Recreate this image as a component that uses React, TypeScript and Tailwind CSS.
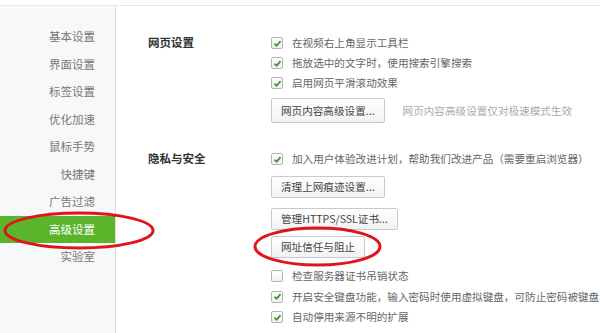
const menu = ['基本设置', '界面设置', '标签设置', '优化加速', '鼠标手势', '快捷键', '广告过滤', '高级设置', '实验室']

function Check({ checked = true }: { checked?: boolean }) {
  return (
    <span className="flex h-[12px] w-[12px] shrink-0 items-center justify-center rounded-[2px] border border-[#b4b4b4] bg-gradient-to-b from-white to-[#f1f1f1]">
      {checked && (
        <svg viewBox="0 0 10 10" className="h-[9px] w-[9px]">
          <path d="M1.6 5.2 L4 7.4 L8.4 2.4" fill="none" stroke="#3c9a2a" strokeWidth="1.9" />
        </svg>
      )}
    </span>
  )
}

function Row({ text, checked = true, h = 'h-5' }: { text: string; checked?: boolean; h?: string }) {
  return (
    <div className={`flex items-center gap-[9px] ${h}`}>
      <Check checked={checked} />
      <span className="whitespace-nowrap">{text}</span>
    </div>
  )
}

function Btn({ children, className = '' }: { children: React.ReactNode; className?: string }) {
  return (
    <div
      className={`flex h-[22px] w-fit items-center whitespace-nowrap rounded-[2px] border border-[#c9c9c9] bg-gradient-to-b from-white to-[#f2f2f2] px-[9px] text-[#444] ${className}`}
    >
      {children}
    </div>
  )
}

export default function App() {
  return (
    <div className="relative h-[333px] w-[600px] overflow-hidden bg-white font-['Noto_Sans_CJK_SC',sans-serif]">
      <div className="h-[6px] border-b border-[#e6e8eb]" />
      <div className="flex h-[327px]">
        <aside className="w-[116px] shrink-0 border-r border-[#dadde2] bg-[#f7f8fa] pt-[17px] text-[11.5px] text-[#777]">
          {menu.map((m) => (
            <div
              key={m}
              className={`flex h-[27.5px] items-center justify-end pr-[20px] ${
                m === '高级设置' ? 'bg-[#5ab52b] text-white' : ''
              }`}
            >
              {m}
            </div>
          ))}
        </aside>

        <main className="flex-1 pl-[32px] pt-[27px] text-[10.6px] text-[#666]">
          <section className="flex">
            <h2 className="flex h-5 w-[123px] shrink-0 items-center text-[11.5px] font-bold text-[#333]">网页设置</h2>
            <div>
              <Row text="在视频右上角显示工具栏" />
              <Row text="拖放选中的文字时，使用搜索引擎搜索" />
              <Row text="启用网页平滑滚动效果" />
              <div className="mt-[5px] flex items-center">
                <Btn className="h-[25px]">网页内容高级设置...</Btn>
                <span className="ml-[18px] text-[#aaa]">网页内容高级设置仅对极速模式生效</span>
              </div>
            </div>
          </section>

          <section className="mt-[26px] flex">
            <h2 className="flex h-5 w-[123px] shrink-0 items-center text-[11.5px] font-bold text-[#333]">隐私与安全</h2>
            <div>
              <Row text="加入用户体验改进计划，帮助我们改进产品（需要重启浏览器）" />
              <Btn className="mt-[7px]">清理上网痕迹设置...</Btn>
              <Btn className="mt-[10px]">管理HTTPS/SSL证书...</Btn>
              <Btn className="mt-[6px]">网址信任与阻止</Btn>
              <div className="mt-[8px]">
                <Row text="检查服务器证书吊销状态" checked={false} h="h-[20.5px]" />
                <Row text="开启安全键盘功能，输入密码时使用虚拟键盘，可防止密码被键盘" h="h-[20.5px]" />
                <Row text="自动停用来源不明的扩展" h="h-[20.5px]" />
              </div>
            </div>
          </section>
        </main>
      </div>

      <svg className="pointer-events-none absolute inset-0" width="600" height="333">
        <ellipse cx="79" cy="230.5" rx="74" ry="17.5" fill="none" stroke="#e0151c" strokeWidth="3" />
        <ellipse cx="317.5" cy="246.5" rx="62.5" ry="18.5" fill="none" stroke="#e0151c" strokeWidth="3" />
      </svg>
    </div>
  )
}
